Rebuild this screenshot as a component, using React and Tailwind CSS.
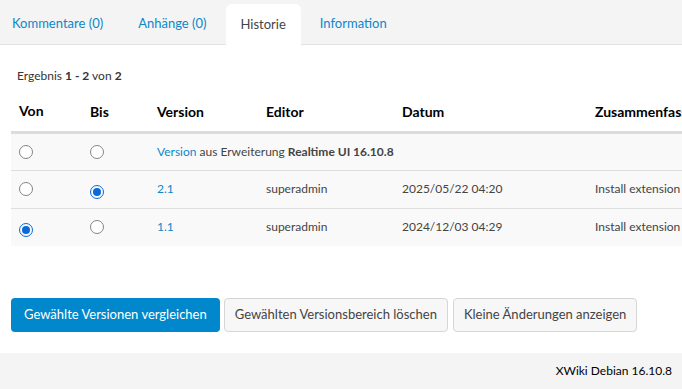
function Radio({ checked }) {
  return (
    <span
      className={`inline-flex w-[14px] h-[14px] rounded-full items-center justify-center border ${
        checked ? 'border-[#0a6bd8]' : 'border-[#858585] bg-white'
      }`}
    >
      {checked && <span className="w-[8px] h-[8px] rounded-full bg-[#0a6bd8]" />}
    </span>
  );
}

const rows = [
  { von: false, bis: false, special: true },
  { von: false, bis: true, version: '2.1', editor: 'superadmin', date: '2025/05/22 04:20', summary: 'Install extension [org.xwiki.platform:xwiki-platform-realtime-ui/16.10.8]' },
  { von: true, bis: false, version: '1.1', editor: 'superadmin', date: '2024/12/03 04:29', summary: 'Install extension [org.xwiki.platform:xwiki-platform-realtime-ui/16.10.8]' },
];

export default function App() {
  return (
    <div className="w-[682px] h-[389px] overflow-hidden bg-white text-[#333] font-['Lato',sans-serif] flex flex-col">
      <div className="h-[45px] bg-[#f4f4f4] border-b border-[#e3e3e3] flex items-end shrink-0">
        <div className="flex items-end text-[13px]">
          <div className="h-[40px] flex items-center pl-[12px] pr-[17px] text-[#0c87c9]">Kommentare (0)</div>
          <div className="h-[40px] flex items-center pl-[18px] pr-[19px] text-[#0c87c9]">Anhänge (0)</div>
          <div className="h-[41px] -mb-px flex items-center px-[15px] bg-white rounded-t-[6px] text-[#444]">Historie</div>
          <div className="h-[40px] flex items-center px-[19px] text-[#0c87c9]">Information</div>
        </div>
      </div>

      <div className="pl-[11px] pt-[22px]">
        <div className="text-[12px] text-[#333] pl-[6px] mb-[7px]">
          Ergebnis <b>1 - 2</b> von <b>2</b>
        </div>
        <table className="w-[760px] border-collapse text-[12px] table-fixed">
          <colgroup>
            <col className="w-[71px]" />
            <col className="w-[67px]" />
            <col className="w-[109px]" />
            <col className="w-[136px]" />
            <col className="w-[193px]" />
            <col className="w-[184px]" />
          </colgroup>
          <thead>
            <tr className="text-[14px] font-bold text-black border-b-[3px] border-[#dcdcdc]">
              <th className="text-left font-bold pl-[8px] h-[40px] pb-[2px]">Von</th>
              <th className="text-left font-bold pl-[8px]">Bis</th>
              <th className="text-left font-bold pl-[8px]">Version</th>
              <th className="text-left font-bold pl-[8px]">Editor</th>
              <th className="text-left font-bold pl-[8px]">Datum</th>
              <th className="text-left font-bold pl-[8px] whitespace-nowrap">Zusammenfassung</th>
            </tr>
          </thead>
          <tbody>
            {rows.map((r, i) => (
              <tr key={i} className="bg-[#f9f9f9] border-b border-[#dedede] last:border-b-0 h-[38px]">
                <td className="pl-[8px] pt-[5px]"><Radio checked={r.von} /></td>
                <td className="pl-[8px] pt-[5px]"><Radio checked={r.bis} /></td>
                {r.special ? (
                  <td colSpan={4} className="pl-[8px] text-[#444]">
                    <span className="text-[#0c87c9]">Version</span> aus Erweiterung <b>Realtime UI 16.10.8</b>
                  </td>
                ) : (
                  <>
                    <td className="pl-[8px] text-[#0c87c9]">{r.version}</td>
                    <td className="pl-[8px] text-[#444]">{r.editor}</td>
                    <td className="pl-[8px] text-[#444]">{r.date}</td>
                    <td className="pl-[8px] text-[#444] whitespace-nowrap overflow-hidden">{r.summary}</td>
                  </>
                )}
              </tr>
            ))}
          </tbody>
        </table>

        <div className="flex gap-[4px] mt-[52px] text-[13px]">
          <button className="h-[34px] px-[13px] rounded-[4px] bg-[#0087cc] text-white">Gewählte Versionen vergleichen</button>
          <button className="h-[34px] px-[10px] rounded-[4px] bg-[#f7f7f7] border border-[#d6d6d6] text-[#444]">Gewählten Versionsbereich löschen</button>
          <button className="h-[34px] px-[10px] rounded-[4px] bg-[#f7f7f7] border border-[#d6d6d6] text-[#444] ml-[1px]">Kleine Änderungen anzeigen</button>
        </div>
      </div>

      <div className="mt-auto h-[36px] bg-[#f4f4f4] flex items-center justify-end pr-[10px] text-[12px] text-black">
        XWiki Debian 16.10.8
      </div>
    </div>
  );
}
